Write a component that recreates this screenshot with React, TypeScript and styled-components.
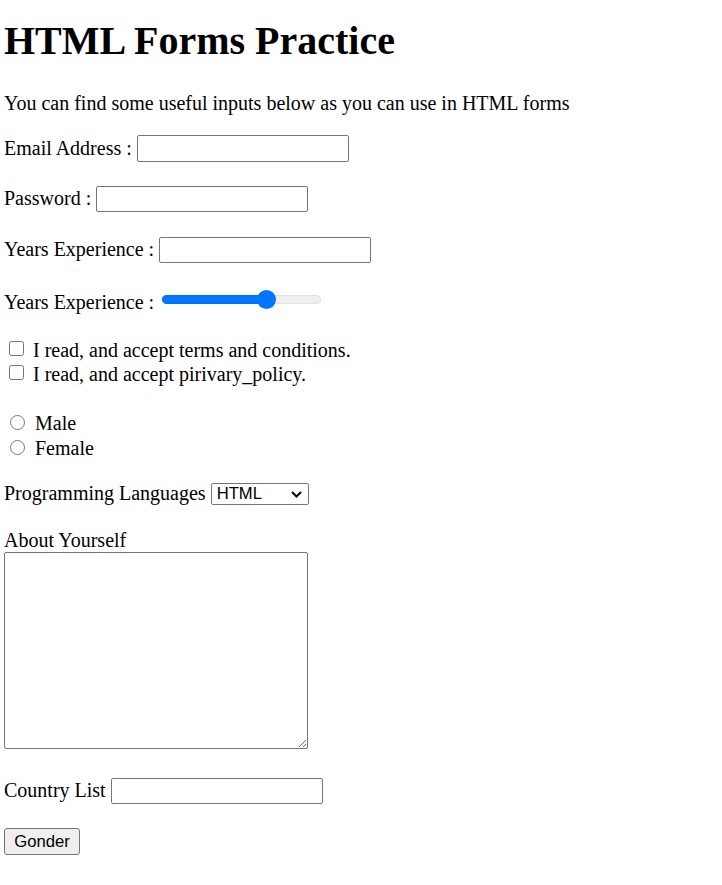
import React from "react";
import styled, { createGlobalStyle } from "styled-components";

const GlobalStyle = createGlobalStyle`
  html, body { margin: 0; padding: 0; background: #fff; }
  body {
    font-family: "Liberation Serif", "Times New Roman", serif;
    font-size: 20px;
    color: #000;
  }
  * { box-sizing: border-box; }
`;

const Page = styled.div`
  padding: 0 0 30px 4px;
  display: flex;
  flex-direction: column;
  align-items: flex-start;
`;

const Title = styled.h1`
  margin: 17.5px 0 0;
  font-size: 40px;
  line-height: 46px;
  font-weight: bold;
`;

const Intro = styled.p`
  margin: 28.75px 0 0;
  line-height: 23px;
`;

const Form = styled.form`
  display: flex;
  flex-direction: column;
  align-items: flex-start;
`;

const Row = styled.div<{ $mt: number; $h: number; $align?: string }>`
  display: flex;
  align-items: ${(p) => p.$align || "center"};
  gap: 5px;
  margin-top: ${(p) => p.$mt}px;
  height: ${(p) => p.$h}px;
  line-height: 23px;
`;

const Label = styled.label`
  line-height: 23px;
  white-space: nowrap;
`;

const TextInput = styled.input`
  width: 212px;
  height: 26.6px;
  border: 1px solid #767676;
  border-radius: 2px;
  padding: 1px 2px;
  font: 16.67px "Liberation Sans", Arial, sans-serif;
  background: #fff;
`;

const Range = styled.input<{ $pct: number }>`
  -webkit-appearance: none;
  appearance: none;
  width: 159px;
  height: 19px;
  margin: 0 0 5.25px 3px;
  background: transparent;
  &::-webkit-slider-runnable-track {
    height: 9px;
    border-radius: 5px;
    background: linear-gradient(
      to right,
      #0075ff 0,
      #0075ff ${(p) => p.$pct}%,
      #efefef ${(p) => p.$pct}%,
      #efefef 100%
    );
    box-shadow: inset 0 0 0 1px rgba(0, 0, 0, 0.06);
  }
  &::-webkit-slider-thumb {
    -webkit-appearance: none;
    appearance: none;
    width: 19px;
    height: 19px;
    border-radius: 50%;
    background: #0075ff;
    margin-top: -5px;
    border: none;
  }
`;

const Check = styled.input<{ $ml: number; $mb: number }>`
  width: 15px;
  height: 15px;
  margin: 0 0 ${(p) => p.$mb}px ${(p) => p.$ml}px;
  flex: none;
`;

const OptionText = styled.span<{ $ml: number }>`
  margin-left: ${(p) => p.$ml}px;
  line-height: 23px;
  white-space: nowrap;
`;

const OptRow = styled.div<{ $mt: number; $h: number }>`
  display: flex;
  align-items: center;
  margin-top: ${(p) => p.$mt}px;
  height: ${(p) => p.$h}px;
`;

const SelectWrap = styled.div`
  position: relative;
  display: flex;
`;

const Select = styled.select`
  -webkit-appearance: none;
  appearance: none;
  width: 98px;
  height: 22.5px;
  border: 1px solid #767676;
  border-radius: 2px;
  font: 16.67px "Liberation Sans", Arial, sans-serif;
  color: #000;
  background: #fff;
  padding: 0 0 0 5px;
`;

const Chevron = styled.svg`
  position: absolute;
  right: 7px;
  top: 50%;
  width: 11px;
  height: 7px;
  margin-top: -3px;
  pointer-events: none;
`;

const AboutLabel = styled.label`
  margin-top: 23.75px;
  line-height: 23.25px;
  display: block;
`;

const TextArea = styled.textarea`
  width: 304px;
  height: 197px;
  border: 1px solid #767676;
  border-radius: 2px;
  font: 16px "Liberation Mono", monospace;
  padding: 2px;
  margin: 0;
  display: block;
`;

const SubmitButton = styled.button`
  margin-top: 24px;
  width: 76px;
  height: 26.5px;
  font: 16.67px "Liberation Sans", Arial, sans-serif;
  color: #000;
  background: #efefef;
  border: 1px solid #767676;
  border-radius: 3px;
  padding: 1px 7px;
`;

export default function App() {
  const min = 0;
  const max = 40;
  const value = 27;
  const f = (value - min) / (max - min);
  const pct = ((9.5 + f * 140) / 159) * 100;

  return (
    <>
      <GlobalStyle />
      <Page>
        <Title>HTML Forms Practice</Title>
        <Intro>You can find some useful inputs below as you can use in HTML forms</Intro>
        <Form onSubmit={(e) => e.preventDefault()}>
          <Row $mt={20} $h={26.6}>
            <Label htmlFor="email">Email Address :</Label>
            <TextInput id="email" type="email" />
          </Row>
          <Row $mt={23.7} $h={26.6}>
            <Label htmlFor="password">Password :</Label>
            <TextInput id="password" type="password" />
          </Row>
          <Row $mt={24.4} $h={26.6}>
            <Label htmlFor="years">Years Experience :</Label>
            <TextInput id="years" type="text" />
          </Row>
          <Row $mt={26.6} $h={24.25} $align="flex-end">
            <Label htmlFor="yearsRange">Years Experience :</Label>
            <Range
              id="yearsRange"
              type="range"
              min={min}
              max={max}
              defaultValue={value}
              $pct={pct}
            />
          </Row>
          <OptRow $mt={25} $h={24}>
            <Check type="checkbox" $ml={5} $mb={4.5} />
            <OptionText $ml={9}>I read, and accept terms and conditions.</OptionText>
          </OptRow>
          <OptRow $mt={0} $h={24}>
            <Check type="checkbox" $ml={5} $mb={4.5} />
            <OptionText $ml={9}>I read, and accept pirivary_policy.</OptionText>
          </OptRow>
          <OptRow $mt={24} $h={25}>
            <Check type="radio" name="gender" $ml={6} $mb={1.5} />
            <OptionText $ml={10}>Male</OptionText>
          </OptRow>
          <OptRow $mt={0} $h={25}>
            <Check type="radio" name="gender" $ml={6} $mb={1.5} />
            <OptionText $ml={10}>Female</OptionText>
          </OptRow>
          <Row $mt={21.5} $h={23}>
            <Label htmlFor="lang">Programming Languages</Label>
            <SelectWrap>
              <Select id="lang" defaultValue="HTML">
                <option>HTML</option>
                <option>CSS</option>
                <option>JavaScript</option>
              </Select>
              <Chevron viewBox="0 0 11 7" aria-hidden="true">
                <path d="M1 1 L5.5 5.5 L10 1" fill="none" stroke="#000" strokeWidth="2" />
              </Chevron>
            </SelectWrap>
          </Row>
          <AboutLabel htmlFor="about">About Yourself</AboutLabel>
          <TextArea id="about" />
          <Row $mt={28} $h={27}>
            <Label htmlFor="country">Country List</Label>
            <TextInput id="country" list="countries" />
            <datalist id="countries">
              <option value="Turkey" />
              <option value="Germany" />
            </datalist>
          </Row>
          <SubmitButton type="submit">Gonder</SubmitButton>
        </Form>
      </Page>
    </>
  );
}
